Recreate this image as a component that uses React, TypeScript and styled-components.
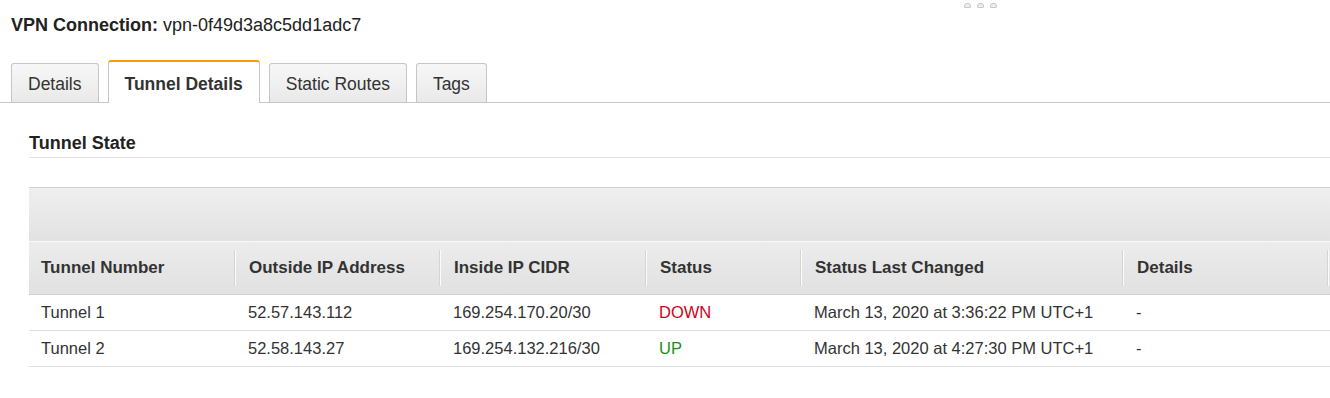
import React from "react";
import styled, { createGlobalStyle } from "styled-components";

const Global = createGlobalStyle`
  html, body { margin: 0; padding: 0; background: #fff; }
  body { font-family: "Liberation Sans", Arial, Helvetica, sans-serif; color: #222; }
`;

const Page = styled.div`
  width: 1330px;
  height: 398px;
  overflow: hidden;
  position: relative;
  background: #fff;
`;

const Grip = styled.div`
  position: absolute;
  top: 3px;
  left: 964px;
  display: flex;
  gap: 6px;
`;

const GripDot = styled.span`
  width: 7px;
  height: 5px;
  border-radius: 3px 3px 1px 1px;
  border: 1px solid #c8c8c8;
  background: #eee;
  box-sizing: border-box;
`;

const Title = styled.h1`
  margin: 0;
  padding: 14px 0 0 11px;
  font-size: 18px;
  line-height: 22px;
  font-weight: normal;
  color: #222;
  b { font-weight: bold; }
`;

const TabBar = styled.div`
  margin-top: 25px;
  padding-left: 11px;
  display: flex;
  align-items: flex-end;
  gap: 9px;
  height: 42px;
  border-bottom: 1px solid #c6c6c6;
  box-sizing: border-box;
`;

const Tab = styled.div<{ $active?: boolean }>`
  box-sizing: border-box;
  padding: ${(p) => (p.$active ? "3px" : "2px")} 16px 0;
  height: ${(p) => (p.$active ? "43px" : "39px")};
  margin-bottom: ${(p) => (p.$active ? "-1px" : "0")};
  display: flex;
  align-items: center;
  justify-content: center;
  font-size: 17.5px;
  font-weight: ${(p) => (p.$active ? "bold" : "normal")};
  color: #333;
  border: 1px solid #c6c6c6;
  border-bottom: none;
  border-top: ${(p) => (p.$active ? "2px solid #f90" : "1px solid #c6c6c6")};
  border-radius: 3px 3px 0 0;
  background: ${(p) => (p.$active ? "#fff" : "linear-gradient(#f7f7f7, #e9e9e9)")};
`;

const Content = styled.div`
  padding-left: 29px;
`;

const SectionTitle = styled.h2`
  margin: 0;
  margin-top: 30px;
  font-size: 18px;
  line-height: 21px;
  font-weight: bold;
  color: #222;
  padding-bottom: 3px;
  border-bottom: 1px solid #e2e2e2;
`;

const Toolbar = styled.div`
  margin-top: 29px;
  height: 53px;
  border-top: 1px solid #cfcfcf;
  background: linear-gradient(#efefef, #e2e2e2);
  width: 1310px;
`;

const Table = styled.div`
  width: 1310px;
  border-top: 1px solid #fafafa;
`;

const cols = "206px 205px 206px 155px 322px 205px 1fr";

const HeadRow = styled.div`
  display: grid;
  grid-template-columns: ${cols};
  height: 52px;
  align-items: center;
  background: linear-gradient(#ececec, #e1e1e1);
  border-bottom: 1px solid #d2d2d2;
`;

const HeadCell = styled.div<{ $first?: boolean }>`
  height: 36px;
  display: flex;
  align-items: center;
  padding-left: ${(p) => (p.$first ? "12px" : "13px")};
  font-size: 17px;
  font-weight: bold;
  color: #333;
  white-space: nowrap;
  border-left: ${(p) => (p.$first ? "none" : "1px solid #fbfbfb")};
  box-shadow: ${(p) => (p.$first ? "none" : "-1px 0 0 #d4d4d4")};
`;

const Row = styled.div`
  display: grid;
  grid-template-columns: ${cols};
  height: 35px;
  align-items: center;
  border-bottom: 1px solid #dedede;
`;

const Cell = styled.div<{ $first?: boolean; $color?: string }>`
  padding-left: ${(p) => (p.$first ? "12px" : "13px")};
  font-size: 16.5px;
  color: ${(p) => p.$color || "#333"};
  white-space: nowrap;
`;

const rows = [
  ["Tunnel 1", "52.57.143.112", "169.254.170.20/30", "DOWN", "March 13, 2020 at 3:36:22 PM UTC+1", "-"],
  ["Tunnel 2", "52.58.143.27", "169.254.132.216/30", "UP", "March 13, 2020 at 4:27:30 PM UTC+1", "-"],
];

const statusColor: Record<string, string> = { DOWN: "#d0021b", UP: "#1a8f1a" };

export default function App() {
  const heads = ["Tunnel Number", "Outside IP Address", "Inside IP CIDR", "Status", "Status Last Changed", "Details", ""];
  return (
    <Page>
      <Global />
      <Grip>
        <GripDot />
        <GripDot />
        <GripDot />
      </Grip>
      <Title>
        <b>VPN Connection:</b> vpn-0f49d3a8c5dd1adc7
      </Title>
      <TabBar>
        <Tab>Details</Tab>
        <Tab $active>Tunnel Details</Tab>
        <Tab>Static Routes</Tab>
        <Tab>Tags</Tab>
      </TabBar>
      <Content>
        <SectionTitle>Tunnel State</SectionTitle>
        <Toolbar />
        <Table>
          <HeadRow>
            {heads.map((h, i) => (
              <HeadCell key={i} $first={i === 0}>
                {h}
              </HeadCell>
            ))}
          </HeadRow>
          {rows.map((r, ri) => (
            <Row key={ri}>
              {r.map((c, ci) => (
                <Cell key={ci} $first={ci === 0} $color={ci === 3 ? statusColor[c] : undefined}>
                  {c}
                </Cell>
              ))}
              <Cell />
            </Row>
          ))}
        </Table>
      </Content>
    </Page>
  );
}
